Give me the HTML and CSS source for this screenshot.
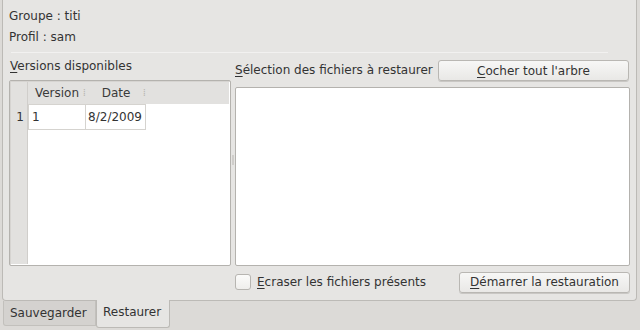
FILE: index.html
```html
<!DOCTYPE html>
<html lang="fr">
<head>
<meta charset="utf-8">
<link rel="stylesheet" href="styles.css">
</head>
<body>
<div class="window">
  <div class="pane">
    <div class="info">
      <div class="info-line">Groupe : titi</div>
      <div class="info-line">Profil : sam</div>
    </div>
    <div class="sep"></div>
    <div class="split">
      <div class="left">
        <div class="label"><u>V</u>ersions disponibles</div>
        <div class="table-frame">
          <div class="vhead">
            <div class="corner"></div>
            <div class="vcell">1</div>
          </div>
          <div class="grid">
            <div class="hrow">
              <div class="hcell c1">Version<span class="grip">⁞</span></div>
              <div class="hcell c2">Date<span class="grip">⁞</span></div>
            </div>
            <div class="row">
              <div class="cell c1">1</div>
              <div class="cell c2 date">8/2/2009</div>
            </div>
          </div>
        </div>
      </div>
      <div class="handle"></div>
      <div class="right">
        <div class="right-top">
          <div class="label rlabel"><u>S</u>élection des fichiers à restaurer</div>
          <button class="btn btn-check"><u>C</u>ocher tout l'arbre</button>
        </div>
        <div class="tree"></div>
      </div>
    </div>
    <div class="bottom">
      <label class="chk"><span class="box"></span><span><u>E</u>craser les fichiers présents</span></label>
      <button class="btn btn-start"><u>D</u>émarrer la restauration</button>
    </div>
  </div>
  <div class="tabs">
    <div class="tab inactive">Sauvegarder</div>
    <div class="tab active">Restaurer</div>
  </div>
</div>
</body>
</html>
```

FILE: styles.css
```css
html, body {
  margin: 0;
  padding: 0;
  background: #dcdad7;
  width: 640px;
  height: 330px;
  overflow: hidden;
  font-family: "DejaVu Sans", "Noto Sans", sans-serif;
  font-size: 12px;
  color: #333333;
}
u { text-decoration: underline; text-underline-offset: 2px; }
.window {
  padding: 0 3px 0 2px;
}
.pane {
  height: 301px;
  box-sizing: border-box;
  border: 1px solid #bcbab6;
  border-top: none;
  border-radius: 0 0 4px 4px;
  background: #e6e5e3;
  padding: 6px 6px 2px 6px;
  display: flex;
  flex-direction: column;
}
.info-line {
  height: 21px;
  line-height: 21px;
}
.sep {
  height: 1px;
  background: #f2f1f0;
  margin: 4px 22px 4px 2px;
}
.split {
  display: flex;
  flex: 1;
  min-height: 0;
}
.left {
  width: 222px;
  display: flex;
  flex-direction: column;
}
.label {
  height: 23px;
  line-height: 18px;
  padding-left: 1px;
}
.table-frame {
  flex: 1;
  border: 1px solid #b4b2ae;
  border-radius: 2px;
  display: flex;
  background: #fff;
  padding: 1px;
  box-shadow: inset 1px 1px 0 #d6d4d1;
}
.vhead {
  width: 16px;
  background: #e2e1df;
  border-right: 1px solid #d0cecb;
}
.corner { height: 22px; }
.vcell {
  height: 26px;
  line-height: 26px;
  text-align: center;
  padding-left: 2px;
}
.grid { flex: 1; }
.hrow {
  height: 22px;
  display: flex;
  background: #e2e1df;
}
.hcell {
  line-height: 22px;
  text-align: center;
  position: relative;
  color: #3a3a3a;
}
.grip {
  position: absolute;
  right: 0;
  top: 0;
  color: #b8b6b2;
  font-size: 10px;
}
.c1 { width: 58px; }
.c2 { width: 60px; }
.row { display: flex; height: 26px; }
.cell {
  box-sizing: border-box;
  line-height: 24px;
  border: 1px solid #d5d3cf;
  padding-left: 3px;
}
.cell.date { border-left: none; text-align: right; padding-right: 3px; padding-left: 0; }
.handle {
  width: 4px;
  position: relative;
}
.handle::after {
  content: "";
  position: absolute;
  left: 1px;
  top: 98px;
  width: 2px;
  height: 10px;
  background: #cfcdca;
}
.right {
  flex: 1;
  display: flex;
  flex-direction: column;
}
.right-top {
  display: flex;
  align-items: flex-start;
  height: 30px;
  gap: 5px;
}
.rlabel { height: 18px; white-space: nowrap; padding-left: 0; margin-top: 4px; }
.btn {
  font-family: inherit;
  font-size: 12px;
  color: #333333;
  border: 1px solid #b9b7b3;
  border-radius: 3px;
  background: linear-gradient(#f7f7f6, #e9e8e6);
  box-shadow: 0 1px 0 #c9c7c4;
  height: 21px;
  padding: 0;
}
.btn-check { flex: 1; margin-top: 3px; margin-right: 1px; }
.tree {
  flex: 1;
  border: 1px solid #b4b2ae;
  border-radius: 2px;
  background: #fff;
}
.bottom {
  display: flex;
  align-items: center;
  height: 32px;
  padding-left: 226px;
}
.chk {
  display: flex;
  align-items: center;
  gap: 6px;
  flex: 1;
}
.box {
  width: 16px;
  height: 16px;
  box-sizing: border-box;
  border: 1px solid #b7b5b1;
  border-radius: 3px;
  background: linear-gradient(#fbfbfa, #efeeec);
}
.btn-start { width: 171px; }
.tabs {
  display: flex;
  padding-left: 1px;
  align-items: flex-start;
}
.tab {
  box-sizing: border-box;
  padding: 0 6px;
  color: #333333;
}
.tab.inactive {
  height: 25px;
  line-height: 24px;
  width: 93px;
  background: #d4d2cf;
  border: 1px solid #c2c0bc;
  border-top: none;
  border-radius: 0 0 0 3px;
}
.tab.active {
  height: 28px;
  line-height: 24px;
  width: 74px;
  margin-top: -1px;
  background: #e6e5e3;
  border: 1px solid #bcbab6;
  border-top: none;
  border-radius: 0 0 3px 3px;
}
```
